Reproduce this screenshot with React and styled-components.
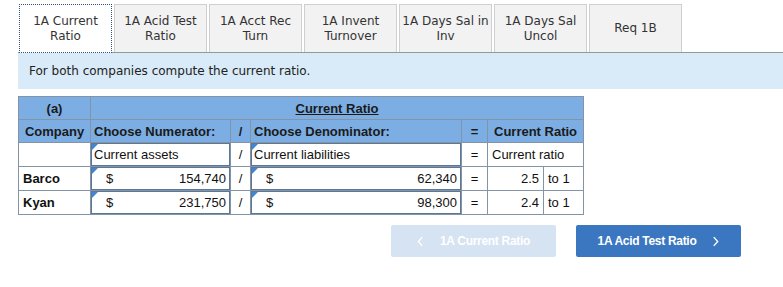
import React from 'react'
import styled, { createGlobalStyle } from 'styled-components';

const GlobalStyle = createGlobalStyle`
  body {
    margin: 0;
    background: #fff;
    font-family: "DejaVu Sans", Verdana, sans-serif;
  }
`;

const tabs = [
  ['1A Current', 'Ratio'],
  ['1A Acid Test', 'Ratio'],
  ['1A Acct Rec', 'Turn'],
  ['1A Invent', 'Turnover'],
  ['1A Days Sal in', 'Inv'],
  ['1A Days Sal', 'Uncol'],
  ['Req 1B'],
];

const rows = [
  { company: 'Barco', num: '154,740', den: '62,340', ratio: '2.5' },
  { company: 'Kyan', num: '231,750', den: '98,300', ratio: '2.4' },
];

const App = () => {
  return (
    <>
      <GlobalStyle />
      <Page>
        <TabBar>
          {tabs.map((t, i) => (
            <Tab key={i} active={i === 0}>
              {t.map((line, j) => <span key={j}>{line}</span>)}
            </Tab>
          ))}
        </TabBar>
        <Instructions>For both companies compute the current ratio.</Instructions>

        <Table>
          <colgroup>
            <col style={{ width: 72 }} />
            <col style={{ width: 140 }} />
            <col style={{ width: 20 }} />
            <col style={{ width: 211 }} />
            <col style={{ width: 26 }} />
            <col style={{ width: 56 }} />
            <col style={{ width: 40 }} />
          </colgroup>
          <tbody>
            <tr>
              <Head align="center">(a)</Head>
              <Head align="center" colSpan={6}><u>Current Ratio</u></Head>
            </tr>
            <tr>
              <Head align="center">Company</Head>
              <Head>Choose Numerator:</Head>
              <Head align="center">/</Head>
              <Head>Choose Denominator:</Head>
              <Head align="center">=</Head>
              <Head align="center" colSpan={2}>Current Ratio</Head>
            </tr>
            <tr>
              <Cell />
              <InputCell><InputBox>Current assets</InputBox></InputCell>
              <Cell align="center">/</Cell>
              <InputCell><InputBox>Current liabilities</InputBox></InputCell>
              <Cell align="center">=</Cell>
              <Cell colSpan={2}>Current ratio</Cell>
            </tr>
            {rows.map(r => (
              <tr key={r.company}>
                <Cell bold>{r.company}</Cell>
                <InputCell>
                  <InputBox money><Dollar>$</Dollar>{r.num}</InputBox>
                </InputCell>
                <Cell align="center">/</Cell>
                <InputCell>
                  <InputBox money><Dollar>$</Dollar>{r.den}</InputBox>
                </InputCell>
                <Cell align="center">=</Cell>
                <Cell align="right">{r.ratio}</Cell>
                <Cell>to 1</Cell>
              </tr>
            ))}
          </tbody>
        </Table>

        <NavRow>
          <NavButton disabled>
            <Chevron viewBox="0 0 8 12"><path d="M6 1 L1.5 6 L6 11" /></Chevron>
            1A Current Ratio
          </NavButton>
          <NavButton primary>
            1A Acid Test Ratio
            <Chevron viewBox="0 0 8 12"><path d="M2 1 L6.5 6 L2 11" /></Chevron>
          </NavButton>
        </NavRow>
      </Page>
    </>
  )
}

export default App

const Page = styled.div`
  width: 783px;
  height: 287px;
  padding: 4px 0 0 18px;
  box-sizing: border-box;
  overflow: hidden;
`;

const TabBar = styled.div`
  display: flex;
  gap: 2px;
  height: 48px;
  padding-left: 1px;
  border-bottom: 1px solid #8f9b9b;
`;

const Tab = styled.div`
  width: 93px;
  box-sizing: border-box;
  display: flex;
  flex-direction: column;
  align-items: center;
  justify-content: center;
  font-size: 12px;
  line-height: 15px;
  color: #333;
  background: ${p => p.active ? '#fff' : '#f2f2f2'};
  border: ${p => p.active ? '1px dotted #2c4f7c' : '1px solid #cfcfcf'};
  border-bottom: ${p => p.active ? '1px dotted #2c4f7c' : 'none'};
  margin-bottom: ${p => p.active ? '-1px' : '0'};
  span { white-space: nowrap; }
`;

const Instructions = styled.div`
  background: #d9eaf8;
  height: 36px;
  display: flex;
  align-items: center;
  padding-left: 11px;
  font-size: 12px;
  color: #222;
`;

const Table = styled.table`
  margin-top: 7px;
  border-collapse: collapse;
  table-layout: fixed;
  width: 565px;
  font-family: "Liberation Sans", Arial, sans-serif;
  font-size: 13px;
  color: #111;
  border: 1px solid #8394a6;
`;

const Head = styled.td`
  background: #7daee3;
  font-weight: bold;
  height: 22px;
  padding: 0 3px;
  text-align: ${p => p.align || 'left'};
  border: 1px solid #8394a6;
  white-space: nowrap;
  color: #1a1a1a;
`;

const Cell = styled.td`
  background: #fff;
  height: 22px;
  padding: 0 4px;
  text-align: ${p => p.align || 'left'};
  font-weight: ${p => p.bold ? 'bold' : 'normal'};
  border: 1px solid #8394a6;
  white-space: nowrap;
`;

const InputCell = styled.td`
  background: #fff;
  padding: 0;
  height: 22px;
  border: 1px solid #8394a6;
`;

const InputBox = styled.div`
  position: relative;
  display: flex;
  align-items: center;
  justify-content: ${p => p.money ? 'flex-end' : 'flex-start'};
  height: 23px;
  box-sizing: border-box;
  border: 1px solid #5d7896;
  padding: ${p => p.money ? '0 3px 0 14px' : '0 2px'};
  white-space: nowrap;
  &::before {
    content: '';
    position: absolute;
    left: 0;
    top: 0;
    border-top: 6px solid #3f86d6;
    border-right: 6px solid transparent;
  }
`;

const Dollar = styled.span`
  margin-right: auto;
`;

const NavRow = styled.div`
  display: flex;
  gap: 20px;
  margin: 10px 0 0 373px;
`;

const NavButton = styled.div`
  width: 165px;
  height: 32px;
  border-radius: 2px;
  display: flex;
  align-items: center;
  justify-content: center;
  gap: 16px;
  font-family: "Liberation Sans", Arial, sans-serif;
  font-weight: bold;
  font-size: 12px;
  letter-spacing: -0.3px;
  color: #fff;
  background: ${p => p.primary ? '#3a77c0' : '#d6e3f2'};
`;

const Chevron = styled.svg`
  width: 7px;
  height: 11px;
  path {
    fill: none;
    stroke: #fff;
    stroke-width: 1.6;
  }
`;
